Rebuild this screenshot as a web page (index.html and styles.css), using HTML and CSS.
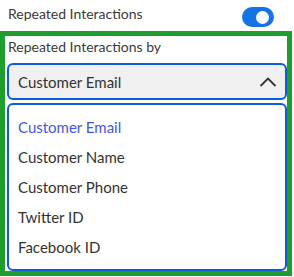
FILE: index.html
```html
<!DOCTYPE html>
<html lang="en">
<head>
  <meta charset="UTF-8" />
  <title>Repeated Interactions</title>
  <link rel="stylesheet" href="styles.css">
</head>
<body>
  <div class="row">
    <span class="label">Repeated Interactions</span>
    <span class="toggle"><span class="knob"></span></span>
  </div>

  <div class="box">
    <div class="label sub">Repeated Interactions by</div>
    <div class="select">
      <span>Customer Email</span>
      <svg width="18" height="12" viewBox="0 0 18 12">
        <path d="M1.5 10 L9 2.5 L16.5 10" fill="none" stroke="#333" stroke-width="1.8" />
      </svg>
    </div>
    <ul class="options">
      <li class="active">Customer Email</li>
      <li>Customer Name</li>
      <li>Customer Phone</li>
      <li>Twitter ID</li>
      <li>Facebook ID</li>
    </ul>
  </div>
</body>
</html>
```

FILE: styles.css
```css
body {
  margin: 0;
  background: #fff;
  color: #333;
  font-family: Lato, "Open Sans", sans-serif;
  width: 294px;
}
.row {
  height: 31px;
  display: flex;
  align-items: center;
  justify-content: space-between;
  padding: 0 20px 0 8px;
  box-sizing: border-box;
}
.row .label {
  margin-top: -3px;
}
.label {
  font-size: 14px;
  line-height: 20px;
  color: #3a3a3a;
}
.toggle {
  width: 32px;
  height: 20px;
  border-radius: 10px;
  background: #1473e6;
  display: flex;
  align-items: center;
  justify-content: flex-end;
  padding-right: 5px;
  box-sizing: border-box;
  margin-top: 3px;
}
.knob {
  width: 13px;
  height: 13px;
  border-radius: 50%;
  background: #fff;
}
.box {
  width: 292px;
  height: 245px;
  border: 5px solid #1f9e2e;
  box-sizing: border-box;
  padding: 1px 0 0 2px;
}
.sub {
  margin-bottom: 6px;
  padding-left: 1px;
}
.select {
  height: 37px;
  border: 2px solid #0b5ae0;
  border-radius: 6px;
  background: #f0f0f0;
  box-sizing: border-box;
  display: flex;
  align-items: center;
  justify-content: space-between;
  padding: 0 8px 0 9px;
  font-size: 15px;
}
.options {
  list-style: none;
  margin: 3px 0 0;
  padding: 7px 0;
  height: 168px;
  box-sizing: border-box;
  border: 2px solid #0b5ae0;
  border-radius: 6px;
}
.options li {
  height: 30px;
  line-height: 30px;
  padding-left: 9px;
  font-size: 15px;
}
.options li.active {
  color: #4356e3;
}
```
